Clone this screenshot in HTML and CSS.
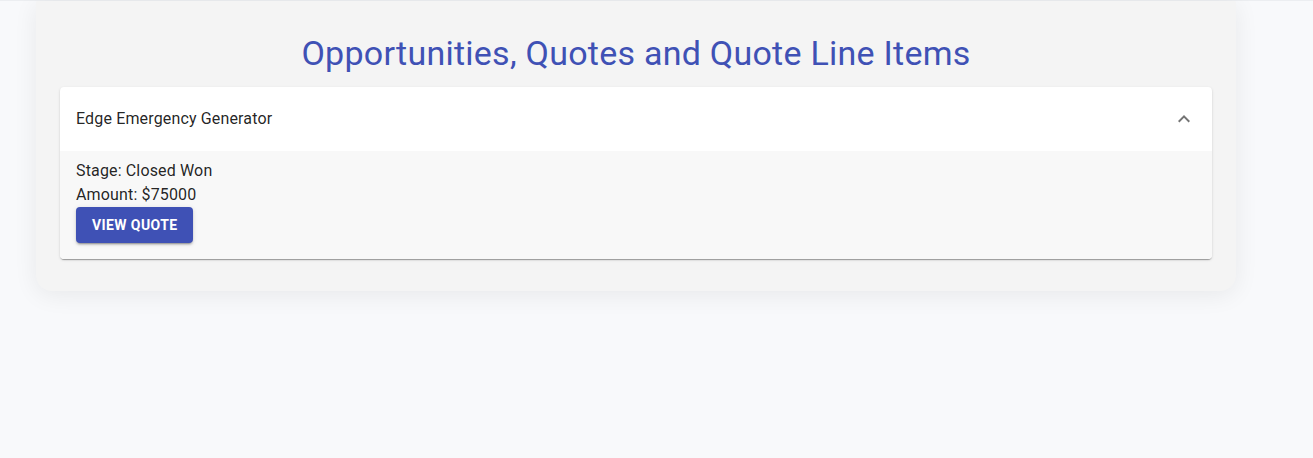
FILE: index.html
```html
<!DOCTYPE html>
<html lang="en">
<head>
<meta charset="utf-8">
<title>Opportunities</title>
<link rel="stylesheet" href="styles.css">
</head>
<body>
<div class="topline"></div>
<main class="card">
  <h1 class="title">Opportunities, Quotes and Quote Line Items</h1>
  <section class="accordion">
    <div class="summary">
      <span class="summary-text">Edge Emergency Generator</span>
      <svg class="chevron" viewBox="0 0 24 24" width="24" height="24" aria-hidden="true"><path d="M12 8l-6 6 1.41 1.41L12 10.83l4.59 4.58L18 14z"/></svg>
    </div>
    <div class="details">
      <div class="line">Stage: Closed Won</div>
      <div class="line">Amount: $75000</div>
      <button class="btn">View Quote</button>
    </div>
  </section>
</main>
</body>
</html>
```
FILE: styles.css
```css
html, body {
  margin: 0;
  padding: 0;
}
body {
  background: #f8f9fb;
  font-family: Roboto, "Liberation Sans", sans-serif;
  color: rgba(0,0,0,0.87);
  min-height: 458px;
}
.topline {
  height: 1px;
  background: #eceef1;
}
.card {
  width: 1200px;
  box-sizing: border-box;
  margin: 0 0 0 36px;
  padding: 31px 24px 32px;
  background: #f4f4f4;
  border-radius: 2px 2px 16px 16px;
  box-shadow: 0 4px 24px rgba(0,0,0,0.07);
}
.title {
  margin: 0 0 13px;
  font-size: 34px;
  font-weight: 400;
  line-height: 42px;
  text-align: center;
  color: #3f51b5;
  letter-spacing: 0.25px;
}
.accordion {
  background: #fff;
  border-radius: 4px;
  box-shadow: 0 2px 1px -1px rgba(0,0,0,.2), 0 1px 1px 0 rgba(0,0,0,.14), 0 1px 3px 0 rgba(0,0,0,.12);
  overflow: hidden;
}
.summary {
  height: 64px;
  display: flex;
  align-items: center;
  justify-content: space-between;
  padding: 0 16px;
}
.summary-text {
  font-size: 16px;
  line-height: 24px;
  letter-spacing: 0.15px;
}
.chevron {
  fill: #757575;
  display: block;
}
.details {
  background: #f8f8f8;
  padding: 8px 16px 16px;
}
.line {
  font-size: 16px;
  line-height: 24px;
  letter-spacing: 0.15px;
}
.btn {
  display: block;
  height: 36px;
  padding: 0 16px;
  border: 0;
  border-radius: 4px;
  background: #3f51b5;
  color: #fff;
  font-family: Roboto, "Liberation Sans", sans-serif;
  font-size: 14px;
  font-weight: 700;
  letter-spacing: 0.4px;
  text-transform: uppercase;
  box-shadow: 0 3px 1px -2px rgba(0,0,0,.2), 0 2px 2px 0 rgba(0,0,0,.14), 0 1px 5px 0 rgba(0,0,0,.12);
}
```
